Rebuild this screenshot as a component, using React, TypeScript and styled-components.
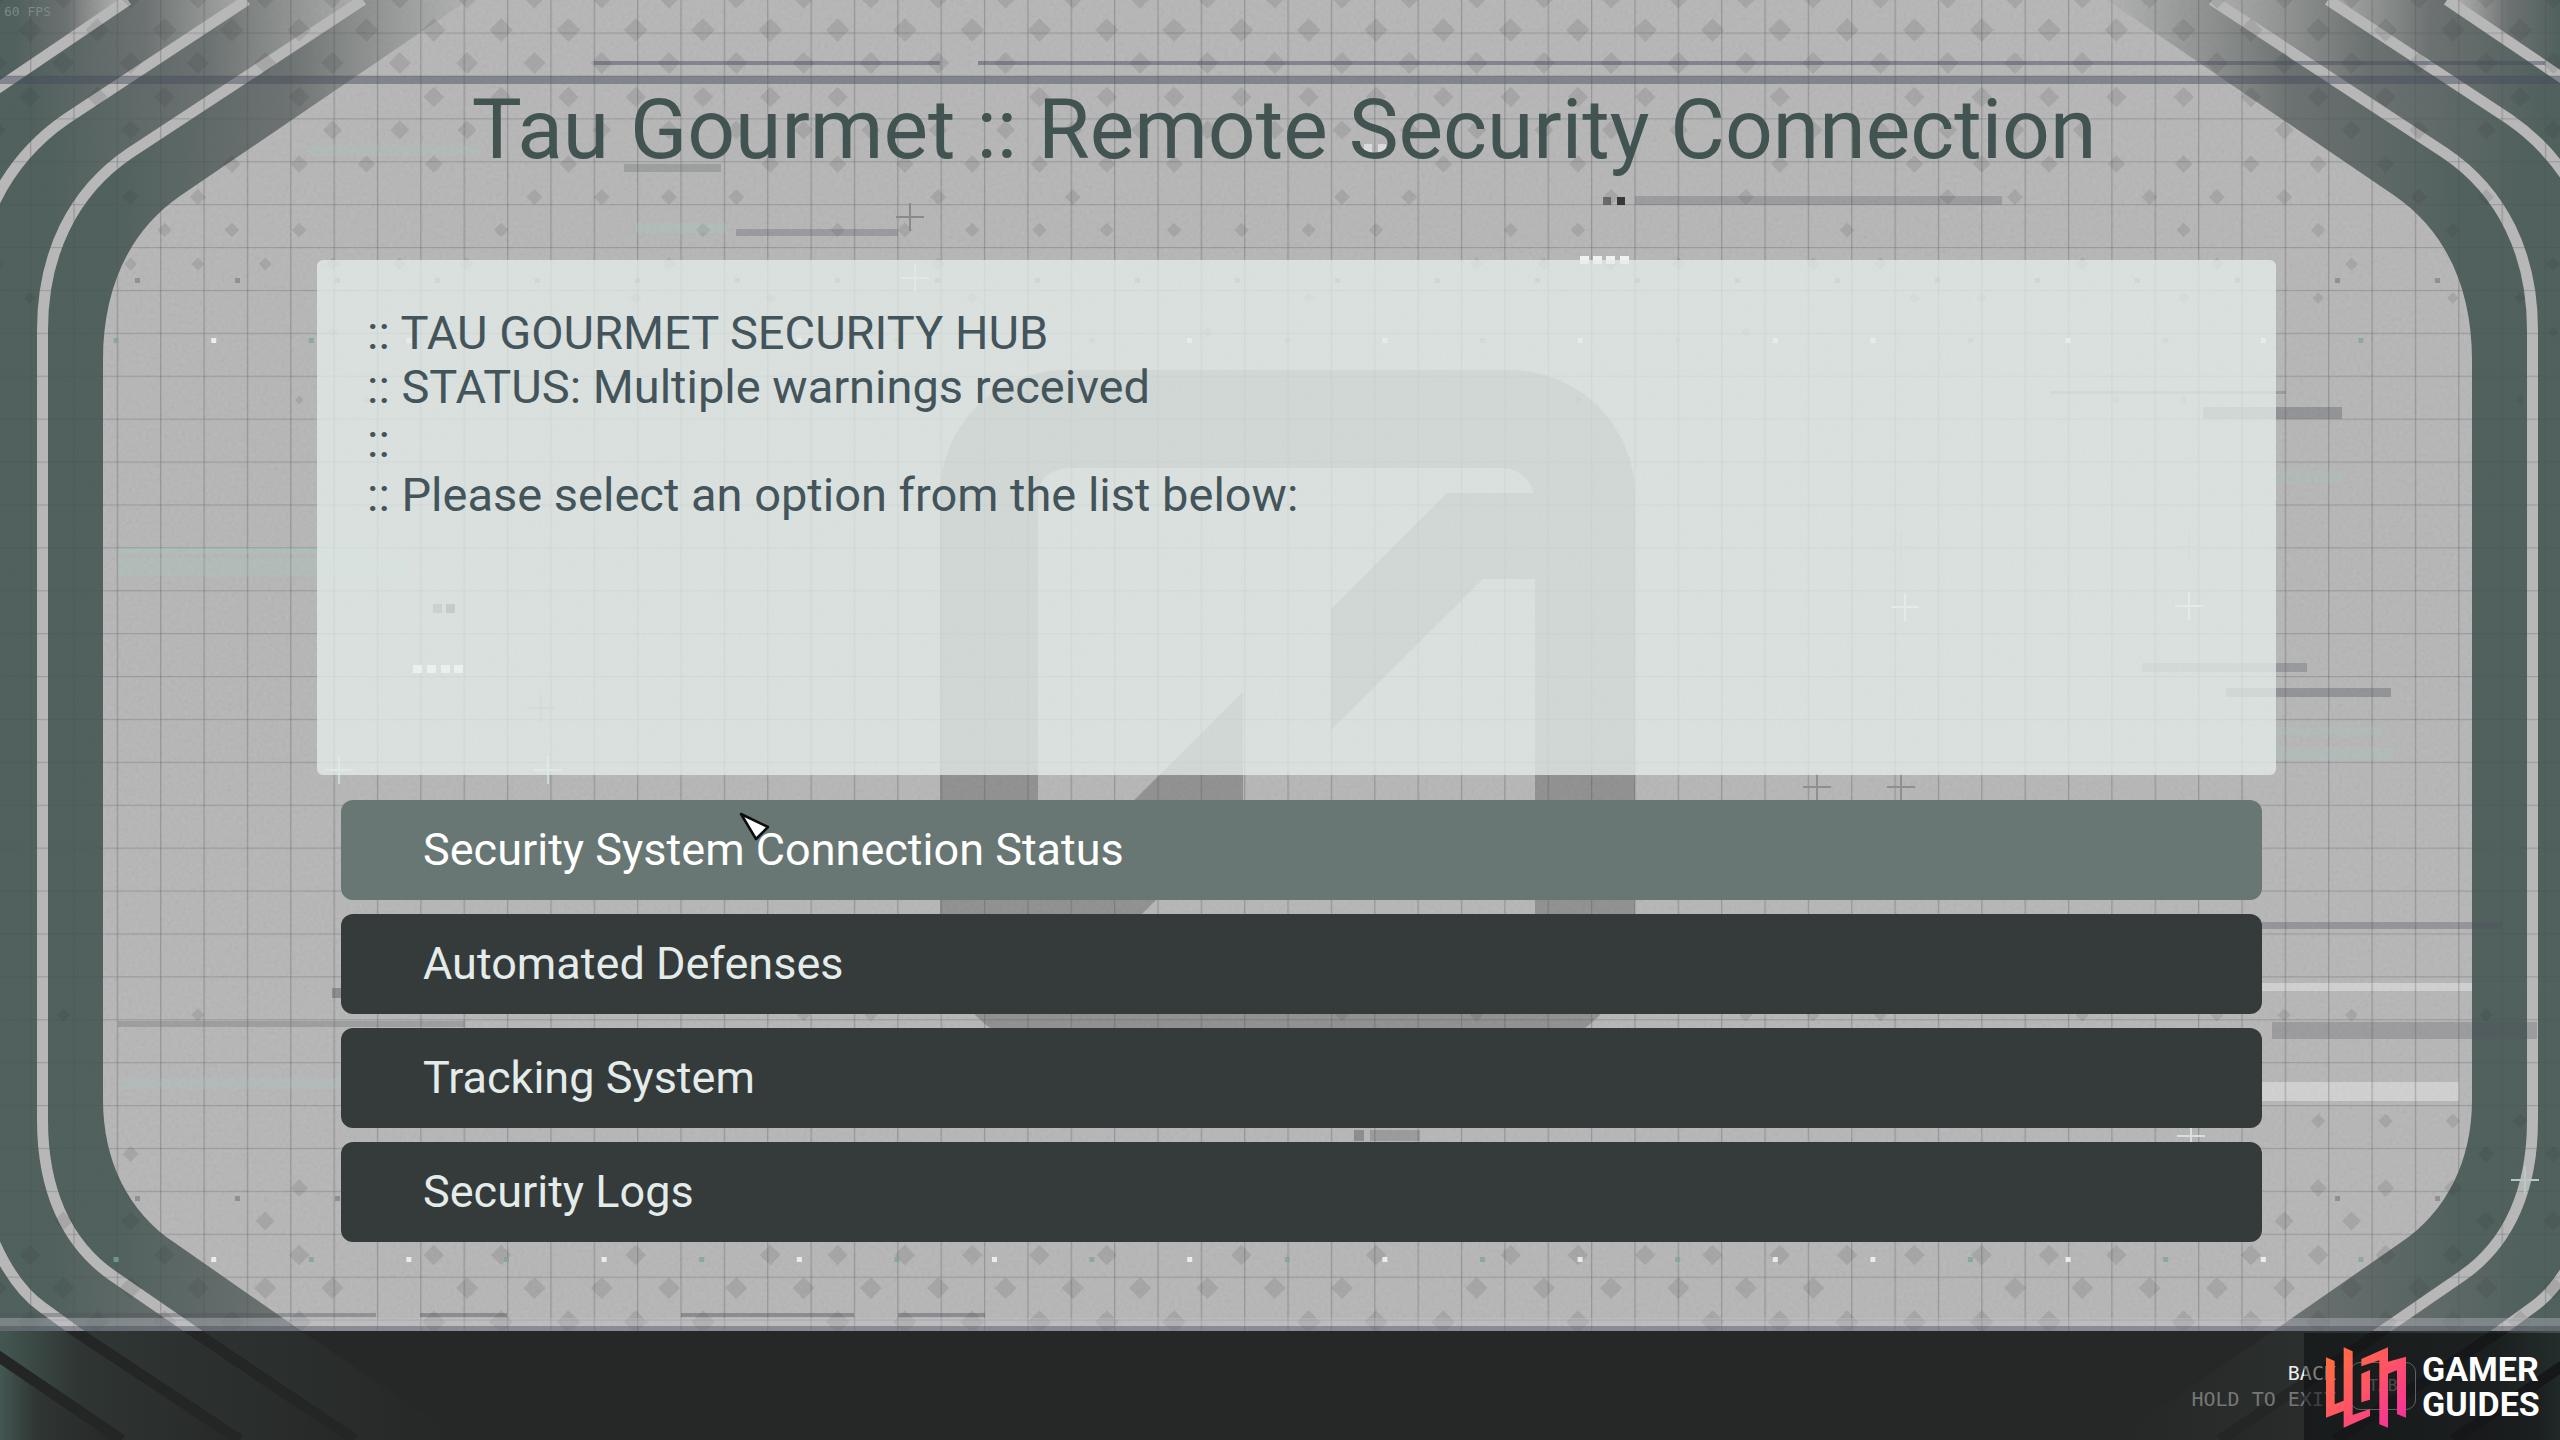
import React, { useState } from 'react';
import styled, { createGlobalStyle } from 'styled-components';

const GlobalStyle = createGlobalStyle`
  *, *::before, *::after { box-sizing: border-box; }
  body {
    margin: 0;
    background: #b3b3b3;
    font-family: Roboto, "Noto Sans", sans-serif;
  }
`;

const Screen = styled.div`
  position: relative;
  display: grid;
  grid-template-rows: auto 1fr auto;
  min-height: 100vh;
  overflow: hidden;
  isolation: isolate;
`;

const BackdropArt = styled.svg`
  position: absolute;
  inset: 0;
  z-index: -1;
  width: 100%;
  height: 100%;
`;

const Header = styled.header`
  padding: 80px 0 80px 8px;
  text-align: center;
`;

const Title = styled.h1`
  margin: 0;
  color: #425451;
  font-size: 84px;
  font-weight: 400;
  line-height: 100px;
`;

const Main = styled.main`
  display: flex;
  flex-direction: column;
  gap: 25px;
  padding: 0 284px 80px 317px;
`;

const Panel = styled.section`
  min-height: 515px;
  padding: 46px 50px;
  border-radius: 6px;
  background: rgba(228, 237, 233, 0.76);
  color: #43545a;
`;

const Line = styled.p`
  margin: 0;
  font-size: 47px;
  line-height: 54px;
`;

const Menu = styled.nav`
  display: flex;
  flex-direction: column;
  gap: 14px;
  padding: 0 14px 0 24px;
`;

const MenuButton = styled.button<{ $active: boolean }>`
  height: 100px;
  padding: 0 82px;
  border: 0;
  border-radius: 12px;
  background: ${(p) => (p.$active ? '#687773' : '#353a3a')};
  color: ${(p) => (p.$active ? '#ffffff' : '#e3ecea')};
  font: 400 45px/54px Roboto, "Noto Sans", sans-serif;
  text-align: left;
  cursor: pointer;
`;

const Footer = styled.footer`
  position: relative;
  display: flex;
  align-items: center;
  justify-content: flex-end;
  height: 109px;
  padding-right: 144px;
  background: #262727;
  isolation: isolate;
`;

const BackButton = styled.button`
  display: flex;
  align-items: center;
  gap: 14px;
  padding: 0;
  border: 0;
  background: none;
  font: 400 20px/26px "DejaVu Sans Mono", monospace;
  cursor: pointer;
`;

const Hints = styled.span`
  display: flex;
  flex-direction: column;
  text-align: right;
`;

const Hint = styled.span<{ $muted?: boolean }>`
  color: ${(p) => (p.$muted ? '#757777' : '#eeeeee')};
`;

const Key = styled.kbd`
  display: grid;
  place-items: center;
  width: 66px;
  height: 48px;
  border: 1px solid #b4b6b6;
  border-radius: 10px;
  color: #8d8f8f;
  font: 400 16px/20px "DejaVu Sans Mono", monospace;
`;

const Watermark = styled.div`
  position: absolute;
  right: 0;
  bottom: 0;
  display: flex;
  align-items: center;
  gap: 6px;
  width: 256px;
  height: 107px;
  padding-left: 12px;
  background: rgba(8, 9, 12, 0.5);
  color: #ffffff;
`;

const WatermarkName = styled.div`
  font-size: 34px;
  font-weight: 700;
  line-height: 35px;
`;

const LogoMark = styled.svg`
  flex: none;
  width: 100px;
  height: 96px;
`;

const FrameCounter = styled.span`
  position: absolute;
  top: 4px;
  left: 4px;
  color: #7c8986;
  font: 400 13px/16px "DejaVu Sans Mono", monospace;
`;

const Pointer = styled.svg`
  position: absolute;
  top: 810px;
  left: 737px;
  width: 36px;
  height: 36px;
  pointer-events: none;
`;

const INNER = 'M468,0 L180,196 C128,232 103,290 103,360 V1100 C103,1160 128,1212 175,1243 L300,1330 L462,1440';
const STRIP_A = 'M363,0 L130,153 C72,192 42.5,255 42.5,330 V1120 C42.5,1188 65,1243 113,1276 L193,1331 L355,1440';
const STRIP_B = 'M247,0 L66,119 C34,141 8,170 -10,212 V1232 C2,1262 18,1290 42,1307 L75,1331 L240,1440';
const STRIP_C = 'M128,0 L-14,96 V1348 L122,1440';

const BANDS = [
  { id: 'a', x1: 110, x2: 460, d: `${INNER} H355 L193,1331 L113,1276 C65,1243 42.5,1188 42.5,1120 V330 C42.5,255 72,192 130,153 L363,0 Z` },
  { id: 'b', x1: 50, x2: 370, d: `${STRIP_A} H240 L75,1331 L42,1307 C18,1290 2,1262 -10,1232 V212 C8,170 34,141 66,119 L247,0 Z` },
  { id: 'c', x1: 30, x2: 260, d: `${STRIP_B} H122 L-14,1348 V96 L128,0 Z` },
  { id: 'd', x1: 14, x2: 120, d: `M-14,0 H128 L-14,96 Z M-14,1348 L122,1440 H-14 Z` },
];

const SIDES = ['', 'translate(2575 0) scale(-1 1)'];

function Frame({ name, tint, strip, fade }: { name: string; tint: string; strip: string; fade: number }) {
  return (
    <>
      <defs>
        {BANDS.map((b) => (
          <linearGradient
            key={b.id}
            id={`${name}-${b.id}`}
            gradientUnits="userSpaceOnUse"
            x1={fade ? b.x1 : 0}
            x2={b.x2}
            y1="0"
            y2="0"
          >
            <stop offset="0" stopColor={tint} stopOpacity={fade ? 0.96 : b.id === 'd' || b.id === 'c' ? 0.95 : 0.42} />
            <stop offset={fade ? 0.5 : 0.3} stopColor={fade ? '#525a59' : tint} stopOpacity={fade ? 0.74 : 0.28} />
            <stop offset="1" stopColor={fade ? '#666a69' : tint} stopOpacity={fade} />
          </linearGradient>
        ))}
      </defs>
      {SIDES.map((side) => (
        <g key={side} transform={side}>
          {BANDS.map((b) => (
            <path key={b.id} d={b.d} fill={`url(#${name}-${b.id})`} />
          ))}
          {[STRIP_A, STRIP_B, STRIP_C].map((d) => (
            <path key={d} d={d} fill="none" stroke={strip} strokeWidth="11" />
          ))}
        </g>
      ))}
    </>
  );
}

type Bar = [x: number, y: number, w: number, h: number, fill: string, opacity: number];

const LILAC = '#5c5d70';
const SLATE = '#50525c';
const MINT = '#a3cfc2';
const WHITE = '#ffffff';

const BARS: Bar[] = [
  [0, 76, 2560, 8, '#454a5a', 0.46],
  [594, 61, 346, 4, '#454a5a', 0.46],
  [978, 61, 1567, 4, '#454a5a', 0.46],
  [624, 164, 97, 8, SLATE, 0.24],
  [736, 229, 162, 7, LILAC, 0.32],
  [1635, 196, 367, 9, SLATE, 0.26],
  [310, 145, 170, 11, MINT, 0.2],
  [636, 223, 90, 10, MINT, 0.24],
  [2203, 407, 139, 12, SLATE, 0.34],
  [2050, 391, 236, 3, SLATE, 0.26],
  [2266, 470, 76, 14, MINT, 0.18],
  [2142, 663, 165, 9, SLATE, 0.28],
  [2226, 688, 165, 9, SLATE, 0.34],
  [2142, 727, 240, 8, MINT, 0.22],
  [2226, 747, 168, 13, MINT, 0.22],
  [118, 548, 260, 6, MINT, 0.3],
  [118, 558, 290, 18, MINT, 0.24],
  [118, 1021, 347, 6, SLATE, 0.24],
  [118, 1078, 225, 11, MINT, 0.22],
  [2240, 922, 262, 7, SLATE, 0.32],
  [2272, 1022, 265, 17, SLATE, 0.26],
  [0, 1313, 376, 4, SLATE, 0.36],
  [420, 1313, 87, 4, SLATE, 0.42],
  [681, 1313, 173, 4, SLATE, 0.42],
  [898, 1313, 87, 4, SLATE, 0.42],
  [0, 1318, 2560, 8, '#c9c9d2', 0.35],
  [0, 1326, 2560, 5, '#6c6e7c', 0.6],
];

const LIGHT_BARS: Bar[] = [
  [2240, 983, 320, 8, WHITE, 0.35],
  [2240, 1082, 219, 19, WHITE, 0.35],
];

const SQUARES: Bar[] = [
  [1603, 197, 8, 8, '#4c4c4c', 0.7],
  [1617, 197, 8, 8, '#222222', 0.85],
  [433, 604, 9, 9, '#333333', 0.45],
  [446, 604, 9, 9, '#333333', 0.65],
  [332, 988, 9, 10, '#333333', 0.3],
  [1354, 1130, 10, 11, '#333333', 0.3],
  [1370, 1130, 50, 11, '#333333', 0.2],
  [1580, 256, 9, 8, WHITE, 0.8],
  [1593, 256, 9, 8, WHITE, 0.8],
  [1606, 256, 9, 8, WHITE, 0.8],
  [1620, 256, 9, 8, WHITE, 0.8],
  [413, 665, 9, 8, WHITE, 0.9],
  [427, 665, 9, 8, WHITE, 0.9],
  [441, 665, 9, 8, WHITE, 0.9],
  [454, 665, 9, 8, WHITE, 0.9],
  [1364, 144, 8, 8, WHITE, 0.5],
  [1378, 144, 8, 8, WHITE, 0.5],
];

const CROSSES: [number, number, string][] = [
  [910, 217, '#8a8a8a'],
  [541, 708, '#a0a0a0'],
  [2189, 547, '#a8a8a8'],
  [1901, 547, '#a8a8a8'],
  [1817, 787, '#8f8f8f'],
  [1901, 787, '#8f8f8f'],
  [1905, 607, '#dde6e3'],
  [2189, 606, '#dde6e3'],
  [2191, 1136, '#d6e0dd'],
  [339, 770, '#c6dcd5'],
  [548, 770, '#c6dcd5'],
  [915, 278, '#d5d8d7'],
  [2525, 1180, '#b9c8c4'],
];

function Bars({ items }: { items: Bar[] }) {
  return (
    <>
      {items.map(([x, y, w, h, fill, opacity]) => (
        <rect key={`${x}-${y}-${w}`} x={x} y={y} width={w} height={h} fill={fill} opacity={opacity} />
      ))}
    </>
  );
}

// Staggered diamond rows that thin out and shrink towards the middle of the screen.
const TOP_ROWS = [-4, 30, 63, 97, 130, 164, 197, 230, 264, 298, 332, 400];
const BOTTOM_ROWS = [1322, 1288, 1255, 1221, 1188, 1154, 1121, 1015];

function diamonds() {
  const out: string[] = [];
  const addRow = (y: number, row: number, edge: number) => {
    for (let col = -1; col < 39; col += 1) {
      const x = 30 + (row % 2 ? 0 : -34) + col * 67.3;
      const noise = Math.abs(Math.sin(col * 12.9898 + (edge + row) * 78.233) * 43758.5453) % 1;
      if (noise < row * 0.085 - 0.12 + (edge ? 0.15 : 0)) continue;
      const r = 12.5 - row * 0.75;
      out.push(`M${x.toFixed(1)},${y - r} l${r},${r} l${-r},${r} l${-r},${-r} Z`);
    }
  };
  TOP_ROWS.forEach((y, i) => addRow(y, i, 0));
  BOTTOM_ROWS.forEach((y, i) => addRow(y, i + 1, 40));
  return out.join(' ');
}

const DIAMONDS = diamonds();
const COLUMNS = Array.from({ length: 26 }, (_, i) => i);

function Backdrop() {
  return (
    <BackdropArt viewBox="0 0 2560 1440" preserveAspectRatio="none" aria-hidden="true">
      <defs>
        <pattern id="grid" x="30" y="32.5" width="43.36" height="42.9" patternUnits="userSpaceOnUse">
          <rect width="1.3" height="42.9" fill="#4a4e50" opacity="0.3" />
          <rect width="43.36" height="1.2" fill="#4a4e50" opacity="0.26" />
        </pattern>
        <filter id="grain" x="0" y="0" width="100%" height="100%">
          <feTurbulence type="fractalNoise" baseFrequency="0.28" numOctaves="2" seed="4" />
          <feColorMatrix type="matrix" values="0.5 0.5 0 0 0  0.5 0.5 0 0 0  0.5 0.5 0 0 0  0 0 0 0 1" />
        </filter>
      </defs>
      <rect width="2560" height="1440" fill="#b6b6b6" />
      <rect width="2560" height="1440" filter="url(#grain)" opacity="0.08" />
      <path
        d="M1065,370 H1510 A125,125 0 0 1 1635,495 V928 A125,125 0 0 1 1510,1053 H1065 A125,125 0 0 1 940,928 V495 A125,125 0 0 1 1065,370 Z M1038,843 L1091,843 L1243,692 V813 L1127,929 H1041 Q1050,953 1073,954 H1504 Q1535,952 1535,924 V579 H1483 L1331,730 V609 L1447,493 H1534 Q1526,469 1502,468 H1069 Q1038,470 1038,499 Z"
        fill="#000000"
        fillRule="evenodd"
        opacity="0.2"
      />
      <Bars items={LIGHT_BARS} />
      <Frame name="edge" tint="#4c5d5a" strip="#b7b7b7" fade={0.1} />
      <rect width="2560" height="1440" fill="url(#grid)" />
      <path d={DIAMONDS} fill="#303030" opacity="0.12" />
      <Bars items={BARS} />
      <Bars items={SQUARES} />
      {CROSSES.map(([x, y, stroke]) => (
        <path key={`${x}-${y}`} d={`M${x - 14},${y} h28 M${x},${y - 14} v28`} stroke={stroke} strokeWidth="2" />
      ))}
      {COLUMNS.slice(1, 25).map((i) => (
        <g key={i} fill="#4a4a4a" opacity="0.35">
          <rect x={35 + i * 100} y="278" width="5" height="5" />
          <rect x={35 + i * 100} y="1196" width="5" height="5" />
        </g>
      ))}
      {COLUMNS.slice(1, 25).map((i) => {
        const white = i > 18 ? i % 2 === 1 : i % 2 === 0;
        return (
          <g key={i} fill={white ? '#eef4f2' : '#7aa597'} opacity={white ? 0.9 : 0.75}>
            <rect x={16 + i * 97.6} y="338" width="5" height="5" />
            <rect x={16 + i * 97.6} y="1257" width="5" height="5" />
          </g>
        );
      })}
    </BackdropArt>
  );
}

function FooterBackdrop() {
  return (
    <BackdropArt viewBox="0 1331 2560 109" preserveAspectRatio="none" aria-hidden="true">
      <Frame name="base" tint="#455a54" strip="#242525" fade={0} />
    </BackdropArt>
  );
}

function GamerGuidesMark() {
  return (
    <LogoMark viewBox="0 0 300 288" aria-hidden="true">
      <defs>
        <linearGradient id="mark" gradientUnits="userSpaceOnUse" x1="40" y1="40" x2="260" y2="250">
          <stop offset="0" stopColor="#ff6f3c" />
          <stop offset="0.5" stopColor="#ff5464" />
          <stop offset="1" stopColor="#f52f9c" />
        </linearGradient>
      </defs>
      <path
        fill="url(#mark)"
        d="M30,55 L56,66 V196 L83,185 V25 L110,37 V228 L162,210 V231 L83,266 V216 L30,236 Z M136,60 L216,25 V68 L270,53 V236 L243,225 V94 L216,104 V266 L190,256 V64 L136,82 Z M136,104 L162,93 V182 L136,190 Z"
      />
    </LogoMark>
  );
}

const MESSAGE = [
  ':: TAU GOURMET SECURITY HUB',
  ':: STATUS: Multiple warnings received',
  '::',
  ':: Please select an option from the list below:',
];

const OPTIONS = ['Security System Connection Status', 'Automated Defenses', 'Tracking System', 'Security Logs'];

export default function App() {
  const [selected, setSelected] = useState(0);

  return (
    <Screen>
      <GlobalStyle />
      <Backdrop />
      <Header>
        <Title>Tau Gourmet :: Remote Security Connection</Title>
      </Header>
      <Main>
        <Panel>
          {MESSAGE.map((text) => (
            <Line key={text}>{text}</Line>
          ))}
        </Panel>
        <Menu aria-label="Terminal options">
          {OPTIONS.map((label, i) => (
            <MenuButton key={label} type="button" $active={i === selected} onClick={() => setSelected(i)}>
              {label}
            </MenuButton>
          ))}
        </Menu>
      </Main>
      <Footer>
        <FooterBackdrop />
        <BackButton type="button">
          <Hints>
            <Hint>BACK</Hint>
            <Hint $muted>HOLD TO EXIT</Hint>
          </Hints>
          <Key>TAB</Key>
        </BackButton>
        <Watermark>
          <GamerGuidesMark />
          <WatermarkName>
            GAMER
            <br />
            GUIDES
          </WatermarkName>
        </Watermark>
      </Footer>
      <FrameCounter>60 FPS</FrameCounter>
      <Pointer viewBox="0 0 36 36" aria-hidden="true">
        <path d="M4,4 L31,17 L19,29 Z" fill="#ffffff" stroke="#0c0c0c" strokeWidth="2.5" strokeLinejoin="round" />
      </Pointer>
    </Screen>
  );
}
